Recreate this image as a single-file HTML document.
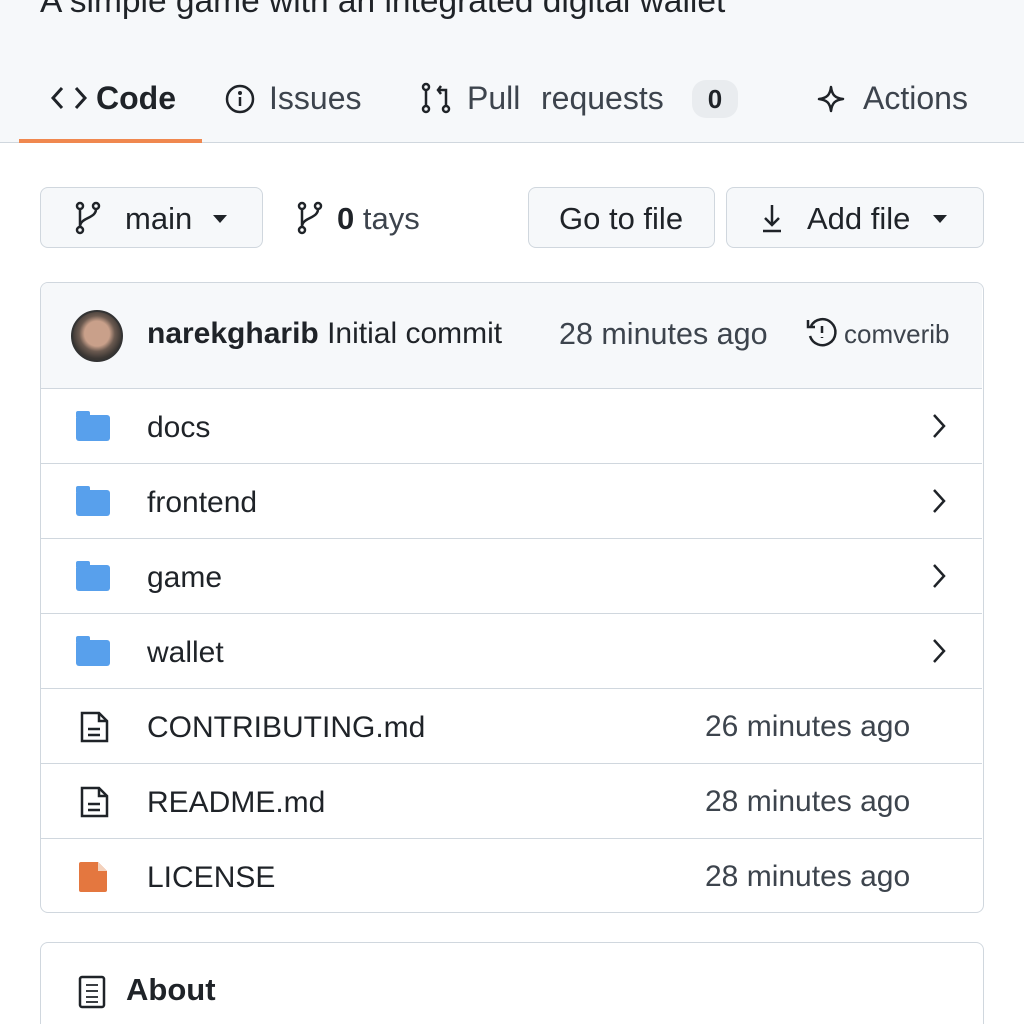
<!DOCTYPE html>
<html><head><meta charset="utf-8"><style>
*{box-sizing:border-box;margin:0;padding:0}
html,body{width:1024px;height:1024px;overflow:hidden}
body{background:#fff;font-family:"Liberation Sans",sans-serif;color:#1f2328;position:relative}
.abs{position:absolute}
.top{left:0;top:0;width:1024px;height:143px;background:#f6f8fa;border-bottom:1.5px solid #d0d7de}
.t{position:absolute;white-space:nowrap}
.btn{position:absolute;border:1.5px solid #d0d7de;border-radius:8px;background:#f6f8fa}
.box{position:absolute;left:40px;width:944px;border:1.5px solid #d0d7de;border-radius:8px;overflow:hidden}
.row{position:absolute;left:0;width:941px;height:75px;border-top:1.5px solid #d0d7de}
.row .n{position:absolute;left:106px;top:22px;font-size:30px;color:#1f2328}
.row .d{position:absolute;left:664px;top:21px;font-size:30px;color:#3d444d}
.fold{position:absolute;left:35px;top:26px;width:34px;height:26px;background:#58a0ec;border-radius:3px}
.fold:before{content:"";position:absolute;left:0;top:-4px;width:14px;height:6px;background:#58a0ec;border-radius:2px 2px 0 0}
.chev{position:absolute;left:888px;top:22px}
</style></head><body>
<div class="abs top"></div>
<div class="t" style="left:40px;top:-17px;font-size:33.5px;color:#1f2328">A simple game with an integrated digital wallet</div>
<svg class="abs" style="left:50px;top:84px" width="38" height="28" viewBox="0 0 38 28"><path d="M12 4L3 14l9 10M26 4l9 10-9 10" stroke="#1f2328" stroke-width="3" fill="none"/></svg>
<div class="t" style="left:96px;top:80px;font-size:32px;font-weight:bold">Code</div>
<div class="abs" style="left:19px;top:139px;width:183px;height:4px;background:#f0884f"></div>
<svg class="abs" style="left:224px;top:83px" width="32" height="32"><circle cx="16" cy="16" r="13" stroke="#1f2328" stroke-width="2.5" fill="none"/><circle cx="16" cy="10" r="2" fill="#1f2328"/><path d="M16 14v9" stroke="#1f2328" stroke-width="2.5"/></svg>
<div class="t" style="left:269px;top:80px;font-size:32px;color:#3d444d">Issues</div>
<svg class="abs" style="left:420px;top:82px" width="32" height="32" fill="none" stroke="#1f2328" stroke-width="2.5"><circle cx="6" cy="5" r="3"/><circle cx="6" cy="27" r="3"/><circle cx="26" cy="27" r="3"/><path d="M6 8v16M26 24V8h-8"/><path d="M21 4l-3 4 3 4"/></svg>
<div class="t" style="left:467px;top:80px;font-size:32px;color:#3d444d">Pull</div>
<div class="t" style="left:541px;top:80px;font-size:32px;color:#3d444d">requests</div>
<div class="abs" style="left:692px;top:80px;width:46px;height:38px;border-radius:14px;background:#e9ecef;font-size:26px;font-weight:bold;text-align:center;line-height:38px">0</div>
<svg class="abs" style="left:817px;top:85px" width="28" height="28"><path d="M14 2C15 10 18 13 26 14 18 15 15 18 14 26 13 18 10 15 2 14 10 13 13 10 14 2Z" stroke="#1f2328" stroke-width="2.5" fill="none" stroke-linejoin="round"/></svg>
<div class="t" style="left:863px;top:80px;font-size:32px;color:#3d444d">Actions</div>
<div class="btn" style="left:40px;top:187px;width:223px;height:61px"></div>
<svg class="abs" style="left:74px;top:201px" width="28" height="34" fill="none" stroke="#1f2328" stroke-width="2.5"><circle cx="6" cy="5" r="3"/><circle cx="6" cy="29" r="3"/><circle cx="22" cy="5" r="3"/><path d="M6 8v18M22 8c0 10-16 8-16 18"/></svg>
<div class="t" style="left:125px;top:201px;font-size:31px">main</div>
<svg class="abs" style="left:211px;top:214px" width="18" height="10"><path d="M2 1h14L9 9z" fill="#1f2328"/></svg>
<svg class="abs" style="left:296px;top:201px" width="28" height="34" fill="none" stroke="#1f2328" stroke-width="2.5"><circle cx="6" cy="5" r="3"/><circle cx="6" cy="29" r="3"/><circle cx="22" cy="5" r="3"/><path d="M6 8v18M22 8c0 10-16 8-16 18"/></svg>
<div class="t" style="left:337px;top:201px;font-size:31px"><b>0</b> <span style="color:#3d444d">tays</span></div>
<div class="btn" style="left:528px;top:187px;width:187px;height:61px"></div>
<div class="t" style="left:559px;top:201px;font-size:31px">Go to file</div>
<div class="btn" style="left:726px;top:187px;width:258px;height:61px"></div>
<svg class="abs" style="left:760px;top:203px" width="24" height="30" stroke="#1f2328" stroke-width="2.5" fill="none"><path d="M12 2v20M5 15l7 7 7-7M3 28h18"/></svg>
<div class="t" style="left:807px;top:201px;font-size:31px">Add file</div>
<svg class="abs" style="left:931px;top:214px" width="18" height="10"><path d="M2 1h14L9 9z" fill="#1f2328"/></svg>
<div class="box" style="top:282px;height:631px">
 <div class="abs" style="left:0;top:0;width:941px;height:106px;background:#f6f8fa"></div>
 <div class="abs" style="left:30px;top:27px;width:52px;height:52px;border-radius:50%;background:radial-gradient(circle at 50% 45%,#c9a08a 0 35%,#6b5a50 50%,#3a3633 70%);border:2px solid #333"></div>
 <div class="t" style="left:106px;top:34px;font-size:30px"><b>narekgharib</b> Initial commit</div>
 <div class="t" style="left:518px;top:34px;font-size:30.5px;color:#3d444d">28 minutes ago</div>
 <svg class="abs" style="left:764px;top:33px" width="34" height="34" fill="none" stroke="#1f2328" stroke-width="2.5"><path d="M6 10A13 13 0 1 1 5 20"/><path d="M3 4v7h7"/><path d="M17 10v7M17 21v1"/></svg>
 <div class="t" style="left:803px;top:36px;font-size:26px;color:#3d444d">comverib</div>
 <div class="row" style="top:105px"><div class="fold"></div><div class="n">docs</div><svg class="chev" width="20" height="30"><path d="M5 4l10 11-10 11" stroke="#1f2328" stroke-width="2.5" fill="none"/></svg></div>
 <div class="row" style="top:180px"><div class="fold"></div><div class="n">frontend</div><svg class="chev" width="20" height="30"><path d="M5 4l10 11-10 11" stroke="#1f2328" stroke-width="2.5" fill="none"/></svg></div>
 <div class="row" style="top:255px"><div class="fold"></div><div class="n">game</div><svg class="chev" width="20" height="30"><path d="M5 4l10 11-10 11" stroke="#1f2328" stroke-width="2.5" fill="none"/></svg></div>
 <div class="row" style="top:330px"><div class="fold"></div><div class="n">wallet</div><svg class="chev" width="20" height="30"><path d="M5 4l10 11-10 11" stroke="#1f2328" stroke-width="2.5" fill="none"/></svg></div>
 <div class="row" style="top:405px"><svg class="abs" style="left:38px;top:21px" width="32" height="34" fill="none" stroke="#1f2328" stroke-width="2.5"><path d="M3 3h17l8 8v20H3z"/><path d="M20 3v8h8M9 19h12M9 25h12"/></svg><div class="n">CONTRIBUTING.md</div><div class="d">26 minutes ago</div></div>
 <div class="row" style="top:480px"><svg class="abs" style="left:38px;top:21px" width="32" height="34" fill="none" stroke="#1f2328" stroke-width="2.5"><path d="M3 3h17l8 8v20H3z"/><path d="M20 3v8h8M9 19h12M9 25h12"/></svg><div class="n">README.md</div><div class="d">28 minutes ago</div></div>
 <div class="row" style="top:555px"><svg class="abs" style="left:37px;top:21px" width="32" height="34"><path d="M3 2h17l9 9v19a2 2 0 0 1-2 2H3a2 2 0 0 1-2-2V4a2 2 0 0 1 2-2z" fill="#e4773f"/><path d="M20 2v9h9z" fill="#f4d2bd"/></svg><div class="n">LICENSE</div><div class="d">28 minutes ago</div></div>
</div>
<div class="box" style="top:942px;height:100px"></div>
<svg class="abs" style="left:78px;top:975px" width="28" height="34" fill="none" stroke="#1f2328" stroke-width="2.5"><rect x="2" y="2" width="24" height="30" rx="2"/><path d="M8 10h12M8 16h12M8 22h12M8 27h12" stroke-width="1.8"/></svg>
<div class="t" style="left:126px;top:972px;font-size:31px;font-weight:bold">About</div>
</body></html>
